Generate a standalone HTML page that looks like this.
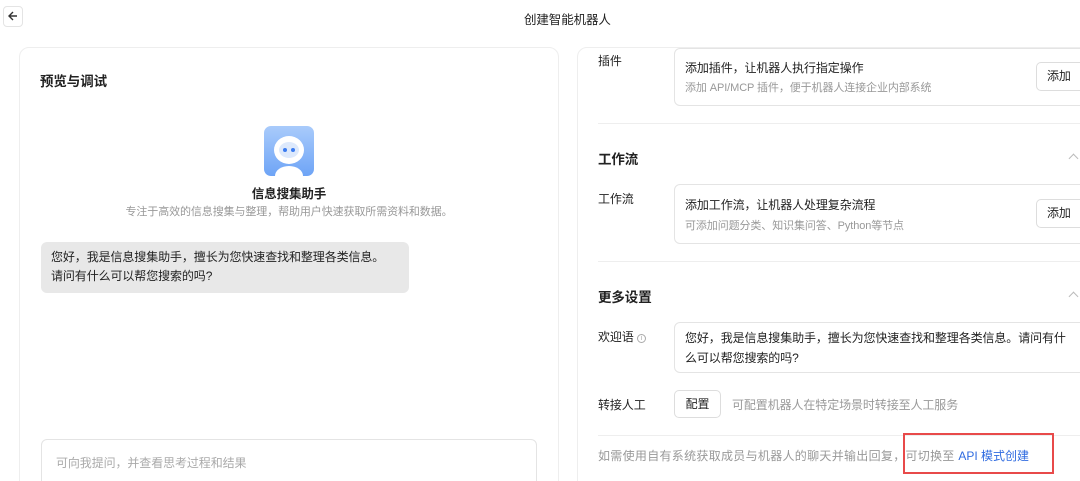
<!DOCTYPE html><html><head><meta charset="utf-8"><style>
*{margin:0;padding:0;box-sizing:border-box}
html,body{width:1080px;height:481px;overflow:hidden}
body{background:#fff;font-family:"Liberation Sans","Noto Sans CJK SC",sans-serif;color:#222;position:relative;font-size:12px;letter-spacing:-0.1px}
.a{position:absolute;white-space:nowrap}
.g{color:#999}
.box{position:absolute;border:1px solid #e4e4e4;border-radius:6px;background:#fff}
.btn{position:absolute;border:1px solid #ddd;border-radius:5px;background:#fff;font-size:12px;text-align:center}
.hr{position:absolute;height:1px;background:#eee}
.chev{position:absolute;width:7px;height:7px;border-left:1px solid #bbb;border-top:1px solid #bbb;transform:rotate(45deg)}
</style></head><body>
<div class="box" style="left:3px;top:6px;width:20px;height:21px;border-radius:4px"></div>
<svg class="a" style="left:7px;top:10px" width="12" height="12" viewBox="0 0 12 12"><path d="M10 6H2M6 2L2 6l4 4" stroke="#333" stroke-width="1.4" fill="none"/></svg>
<div class="a" style="left:524px;top:9px;font-size:12.5px">创建智能机器人</div>

<div class="box" style="left:19px;top:47px;width:540px;height:450px;border-radius:10px;border-color:#eee"></div>
<div class="a" style="left:40px;top:70px;font-size:13.5px;font-weight:bold">预览与调试</div>
<div class="a" style="left:264px;top:126px;width:50px;height:50px;border-radius:7px;background:linear-gradient(#a9cbfb,#6ea4f6);overflow:hidden">
<div style="position:absolute;left:10px;top:10px;width:30px;height:28px;border-radius:50%;background:#fff"></div>
<div style="position:absolute;left:15px;top:16px;width:20px;height:16px;border-radius:50%;background:#dde9fc"></div>
<div style="position:absolute;left:19px;top:22px;width:4px;height:4px;border-radius:50%;background:#3b7cf0"></div>
<div style="position:absolute;left:27px;top:22px;width:4px;height:4px;border-radius:50%;background:#3b7cf0"></div>
<div style="position:absolute;left:11px;top:40px;width:28px;height:20px;border-radius:50%;background:#fff"></div>
</div>
<div class="a" style="left:189px;width:200px;text-align:center;top:183px;font-weight:bold;font-size:12.5px">信息搜集助手</div>
<div class="a g" style="left:89px;width:400px;text-align:center;top:203px;font-size:11px">专注于高效的信息搜集与整理，帮助用户快速获取所需资料和数据。</div>
<div class="a" style="left:41px;top:242px;width:368px;height:51px;background:#e8e8e8;border-radius:6px;padding:6px 10px;line-height:19px">您好，我是信息搜集助手，擅长为您快速查找和整理各类信息。<br>请问有什么可以帮您搜索的吗?</div>
<div class="box" style="left:41px;top:439px;width:496px;height:60px;border-radius:6px"></div>
<div class="a g" style="left:56px;top:454px;color:#aaa">可向我提问，并查看思考过程和结果</div>

<div class="box" style="left:577px;top:47px;width:520px;height:450px;border-radius:10px;border-color:#eee"></div>
<div class="a" style="left:598px;top:52px">插件</div>
<div class="box" style="left:674px;top:48px;width:420px;height:58px"></div>
<div class="a" style="left:685px;top:59px">添加插件，让机器人执行指定操作</div>
<div class="a g" style="left:685px;top:79px;font-size:11px">添加 API/MCP 插件，便于机器人连接企业内部系统</div>
<div class="btn" style="left:1036px;top:62px;width:60px;height:29px;line-height:27px;text-align:left;padding-left:10px">添加</div>
<div class="hr" style="left:598px;top:123px;width:482px"></div>
<div class="a" style="left:598px;top:148px;font-weight:bold;font-size:13.5px">工作流</div>
<div class="chev" style="left:1070px;top:155px"></div>
<div class="a" style="left:598px;top:190px">工作流</div>
<div class="box" style="left:674px;top:184px;width:420px;height:60px"></div>
<div class="a" style="left:685px;top:196px">添加工作流，让机器人处理复杂流程</div>
<div class="a g" style="left:685px;top:217px;font-size:11px">可添加问题分类、知识集问答、Python等节点</div>
<div class="btn" style="left:1036px;top:199px;width:60px;height:29px;line-height:27px;text-align:left;padding-left:10px">添加</div>
<div class="hr" style="left:598px;top:261px;width:482px"></div>
<div class="a" style="left:598px;top:286px;font-weight:bold;font-size:13.5px">更多设置</div>
<div class="chev" style="left:1070px;top:293px"></div>
<div class="a" style="left:598px;top:328px">欢迎语 <span style="display:inline-block;width:9px;height:9px;border:1px solid #aaa;border-radius:50%;font-size:7px;line-height:7px;text-align:center;color:#aaa;vertical-align:1px">i</span></div>
<div class="box" style="left:674px;top:322px;width:420px;height:51px;padding:5px 10px;line-height:20px">您好，我是信息搜集助手，擅长为您快速查找和整理各类信息。请问有什<br>么可以帮您搜索的吗?</div>
<div class="a" style="left:598px;top:396px">转接人工</div>
<div class="btn" style="left:674px;top:390px;width:47px;height:28px;line-height:26px">配置</div>
<div class="a g" style="left:732px;top:396px">可配置机器人在特定场景时转接至人工服务</div>
<div class="hr" style="left:598px;top:435px;width:482px"></div>
<div class="a g" style="left:598px;top:447px;letter-spacing:0.3px">如需使用自有系统获取成员与机器人的聊天并输出回复，可切换至 <span style="color:#2f6be0;letter-spacing:0">API 模式创建</span></div>
<div class="a" style="left:903px;top:433px;width:151px;height:41px;border:2px solid #e84a4a"></div>
</body></html>
